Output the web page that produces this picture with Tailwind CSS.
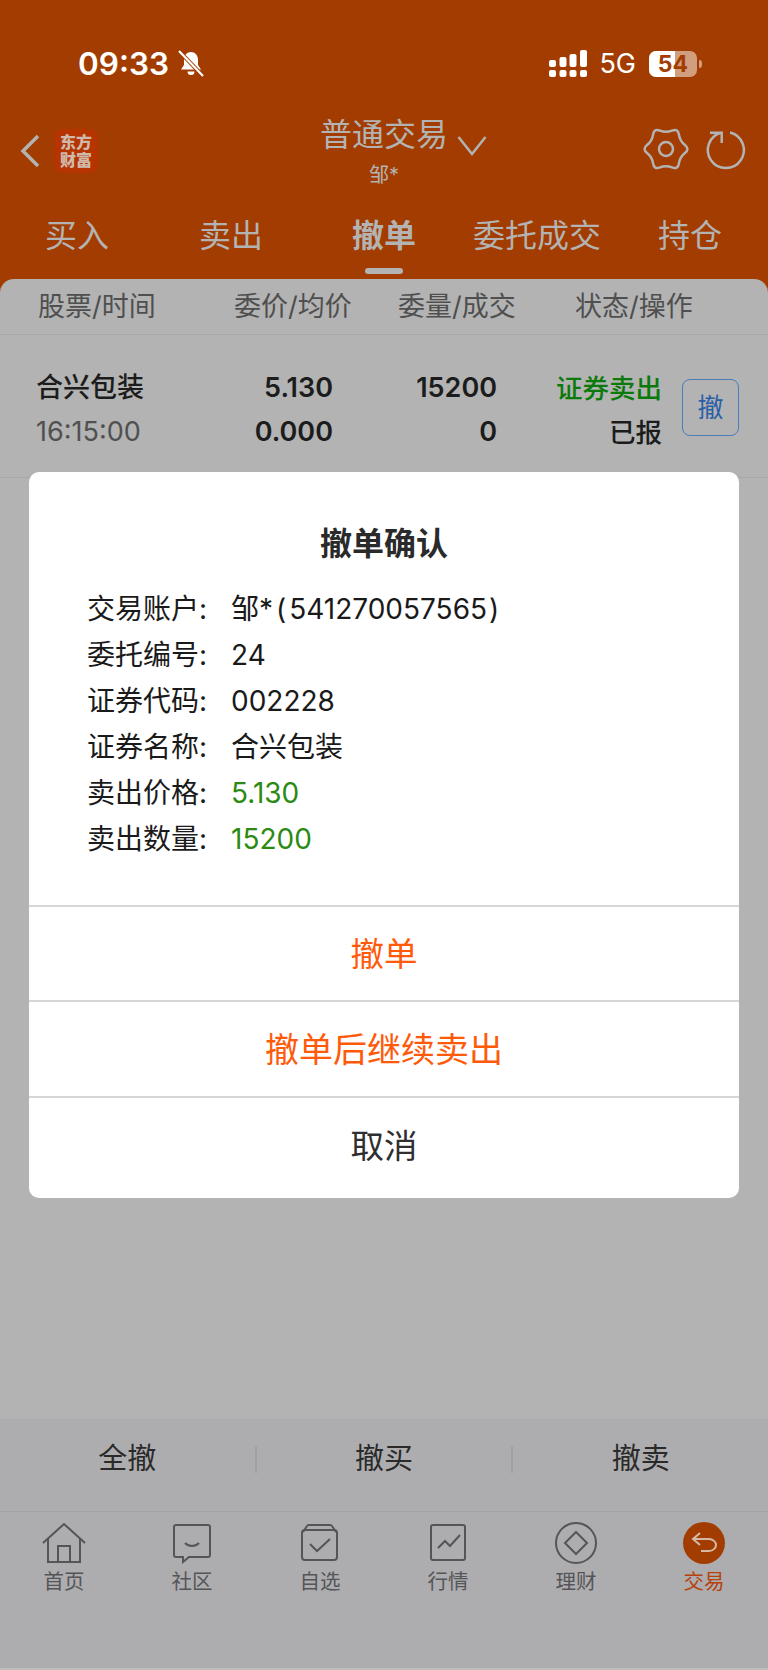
<!DOCTYPE html>
<html lang="zh-CN">
<head>
<meta charset="utf-8">
<script src="https://cdn.jsdelivr.net/npm/@tailwindcss/browser@4"></script>
</head>
<body class="m-0">
<div class="relative w-[768px] h-[1670px] overflow-hidden flex flex-col bg-[#a33c00] font-['Inter','Noto_Sans_CJK_SC',sans-serif] text-[#1c1c1c]">

  <!-- status bar -->
  <div class="h-[100px] shrink-0 flex items-start pt-[44px] pl-[78px] pr-[66px] text-white">
    <span class="text-[31.500px] leading-[39px] font-semibold">09:33</span>
    <svg class="ml-[9px] mt-[6px]" width="26" height="28" viewBox="0 0 26 28" fill="white">
      <path d="M13 2c-4 0-7 3-7 8v5l-3 4.500h20l-3-4.500v-5c0-5-3-8-7-8z"/>
      <path d="M9.500 21.500a3.500 3.500 0 0 0 7 0z"/>
      <path d="M1 1l24 25" stroke="#a33c00" stroke-width="4"/>
      <path d="M1 1l24 25" stroke="white" stroke-width="2.200"/>
    </svg>
    <div class="ml-auto flex items-center h-[39px]">
      <svg width="38" height="28" viewBox="0 0 38 28" fill="white">
        <rect x="0" y="10" width="7" height="7" rx="2"/><rect x="0" y="20" width="7" height="7" rx="2"/>
        <rect x="10.500" y="7" width="7" height="10" rx="2"/><rect x="10.500" y="20" width="7" height="7" rx="2"/>
        <rect x="20.500" y="4" width="7" height="13" rx="2"/><rect x="20.500" y="20" width="7" height="7" rx="2"/>
        <rect x="31" y="0" width="7" height="17" rx="2"/><rect x="31" y="20" width="7" height="7" rx="2"/>
      </svg>
      <span class="ml-[12px] text-[27px] leading-[39px] font-normal">5G</span>
      <div class="relative ml-[13px] w-[48px] h-[26px] rounded-[7px] bg-white/50">
        <div class="w-[26px] h-full rounded-l-[7px] bg-white"></div>
        <span class="absolute inset-0 text-center text-[23px] leading-[26px] font-bold text-[#a33c00]">54</span>
      </div>
      <div class="w-[3px] h-[8px] ml-[2px] rounded-r-full bg-white/50"></div>
    </div>
  </div>

  <!-- header -->
  <div class="h-[98px] shrink-0 relative flex items-start">
    <svg class="ml-[20px] mt-[34px]" width="20" height="34" viewBox="0 0 20 34" fill="none" stroke="#b3b3b3" stroke-width="3.500"><path d="M18 2L3 17l15 15"/></svg>
    <div class="ml-[14px] mt-[29px] w-[44px] h-[44px] rounded-[8px] bg-[#b53400] flex flex-col items-center justify-center text-[#d0b8aa] text-[16px] leading-[18px] font-black">
      <span>东方</span><span>财富</span>
    </div>
    <div class="absolute left-[319px] top-[15px] w-[130px] text-center">
      <div class="text-[32px] leading-[40px] text-[#b3b3b3] whitespace-nowrap">普通交易</div>
      <div class="text-[20px] leading-[24px] text-[#b3b3b3] mt-[8px]">邹*</div>
    </div>
    <svg class="absolute left-[457px] top-[35px]" width="30" height="22" viewBox="0 0 30 22" fill="none" stroke="#b3b3b3" stroke-width="2.500"><path d="M1.500 2L15 19 28.500 2"/></svg>
    <svg class="absolute left-[644px] top-[28px] overflow-visible" width="44" height="42" viewBox="0 0 44 42" fill="none" stroke="#b3b3b3" stroke-width="2.500">
      <path d="M28 2.610Q34 .22 34.930 6.610Q35.860 13 40.930 17Q46 21 40.930 25Q35.860 29 34.930 35.390Q34 41.780 28 39.390Q22 37 16 39.390Q10 41.780 9.070 35.390Q8.140 29 3.070 25Q-2 21 3.070 17Q8.140 13 9.070 6.610Q10 .22 16 2.610Q22 5 28 2.610z"/>
      <circle cx="22" cy="21" r="7"/>
    </svg>
    <svg class="absolute left-[706px] top-[30px] overflow-visible" width="40" height="40" viewBox="0 0 40 40" fill="none" stroke="#b3b3b3" stroke-width="2.500">
      <path d="M24 2.500A18 18 0 1 1 15.700 2.500M4 2.700h11.700V13"/>
    </svg>
  </div>

  <!-- tabs -->
  <div class="h-[81px] shrink-0 relative text-[#b3b3b3] text-[32px] leading-[38px]">
    <span class="absolute left-[45px] top-[19px]">买入</span>
    <span class="absolute left-[199px] top-[19px]">卖出</span>
    <span class="absolute left-[352px] top-[19px] font-bold">撤单</span>
    <span class="absolute left-[473px] top-[19px]">委托成交</span>
    <span class="absolute left-[658px] top-[19px]">持仓</span>
    <div class="absolute left-[365px] top-[70px] w-[38px] h-[6px] rounded-full bg-[#b3b3b3]"></div>
  </div>

  <!-- content -->
  <div class="flex-1 min-h-0 flex flex-col rounded-t-[14px] bg-[#b3b3b3]">
    <div class="h-[56px] shrink-0 flex items-center border-b border-[#a8a8a8] text-[#4f4f4f] text-[27px] leading-[32px] whitespace-nowrap">
      <span class="ml-[38px] w-[196px]">股票/时间</span>
      <span class="w-[164px]">委价/均价</span>
      <span class="w-[177px]">委量/成交</span>
      <span>状态/操作</span>
    </div>
    <div class="h-[143px] shrink-0 flex items-center pt-[8px] border-b border-[#a8a8a8]">
      <div class="ml-[36px] w-[130px] whitespace-nowrap">
        <div class="text-[27px] leading-[44px] font-medium">合兴包装</div>
        <div class="text-[27px] leading-[44px] text-[#505050]">16:15:00</div>
      </div>
      <div class="w-[167px] text-right text-[27px] leading-[44px] font-semibold">
        <div>5.130</div><div>0.000</div>
      </div>
      <div class="w-[164px] text-right text-[27px] leading-[44px] font-semibold">
        <div>15200</div><div>0</div>
      </div>
      <div class="w-[165px] text-right text-[26.500px] leading-[44px]">
        <div class="font-medium text-[#0b7a0b]">证券卖出</div>
        <div class="font-medium">已报</div>
      </div>
      <div class="ml-[20px] -mt-[6px] w-[57px] h-[57px] rounded-[8px] border border-[#4a7dbb] flex items-center justify-center text-[26px] text-[#2a5fa8]">撤</div>
    </div>
    <div class="flex-1"></div>
    <div class="h-[93px] shrink-0 bg-[#adadaf] border-b border-[#a3a3a5] flex items-center pb-[12px] text-[29px] text-[#2a2a2a]">
      <div class="flex-1 text-center">全撤</div>
      <div class="w-[2px] h-[27px] bg-[#a0a0a0]"></div>
      <div class="flex-1 text-center">撤买</div>
      <div class="w-[2px] h-[27px] bg-[#a0a0a0]"></div>
      <div class="flex-1 text-center">撤卖</div>
    </div>
    <div class="h-[158px] shrink-0 bg-[#adadaf] border-b-2 border-[#bdbdbd] flex items-start pt-[10px] text-[20.500px] leading-[26px] text-[#555558]">
      <div class="flex-1 flex flex-col items-center">
        <svg width="44" height="42" viewBox="0 0 44 42" fill="none" stroke="#555558" stroke-width="2"><path d="M1 21L22 2l21 19M6 17v23h32V17M16 40V24h12v16"/></svg>
        <span class="mt-[5px]">首页</span>
      </div>
      <div class="flex-1 flex flex-col items-center">
        <svg width="40" height="42" viewBox="0 0 40 42" fill="none" stroke="#555558" stroke-width="2"><path d="M4 3h32a2 2 0 0 1 2 2v28a2 2 0 0 1-2 2H17l-6 5v-5H4a2 2 0 0 1-2-2V5a2 2 0 0 1 2-2z"/><path d="M13 21c4 4 10 4 14 0"/></svg>
        <span class="mt-[5px]">社区</span>
      </div>
      <div class="flex-1 flex flex-col items-center">
        <svg width="40" height="42" viewBox="0 0 40 42" fill="none" stroke="#555558" stroke-width="2"><rect x="2" y="8" width="35" height="30" rx="3"/><path d="M3 10l4-6a2 2 0 0 1 2-1h21a2 2 0 0 1 2 1l4 6M10 22l7 7 13-12"/></svg>
        <span class="mt-[5px]">自选</span>
      </div>
      <div class="flex-1 flex flex-col items-center">
        <svg width="38" height="42" viewBox="0 0 38 42" fill="none" stroke="#555558" stroke-width="2"><rect x="2" y="3" width="34" height="35" rx="2"/><path d="M9 26l7-7 5 5 10-11"/></svg>
        <span class="mt-[5px]">行情</span>
      </div>
      <div class="flex-1 flex flex-col items-center">
        <svg width="42" height="42" viewBox="0 0 42 42" fill="none" stroke="#555558" stroke-width="2"><circle cx="21" cy="21" r="20"/><path d="M21 10l11 11-11 11-11-11z"/></svg>
        <span class="mt-[5px]">理财</span>
      </div>
      <div class="flex-1 flex flex-col items-center text-[#b5420a]">
        <svg width="42" height="42" viewBox="0 0 42 42" fill="none"><circle cx="21" cy="21" r="21" fill="#a33c00"/><path d="M17 11l-7 6 7 6M10 17h16c4 0 7 3 7 6s-3 6-7 6h-8" stroke="#d5b8a6" stroke-width="2"/></svg>
        <span class="mt-[5px]">交易</span>
      </div>
    </div>
  </div>

  <!-- dialog -->
  <div class="absolute left-[29px] top-[472px] w-[710px] h-[726px] rounded-[10px] bg-white flex flex-col text-[#1a1a1a]">
    <div class="h-[435px] shrink-0 border-b-2 border-[#d6d6d6] flex flex-col">
      <div class="pt-[52px] text-center text-[32px] leading-[40px] font-semibold text-[#2a2a2a]">撤单确认</div>
      <div class="mt-[22px] ml-[58px] text-[28px] leading-[46px]">
        <div class="flex"><span class="w-[144px]">交易账户:</span><span>邹*<span class="mx-[3px]">(</span>541270057565<span class="ml-[2px]">)</span></span></div>
        <div class="flex"><span class="w-[144px]">委托编号:</span><span>24</span></div>
        <div class="flex"><span class="w-[144px]">证券代码:</span><span>002228</span></div>
        <div class="flex"><span class="w-[144px]">证券名称:</span><span>合兴包装</span></div>
        <div class="flex"><span class="w-[144px]">卖出价格:</span><span class="text-[#2b8a12]">5.130</span></div>
        <div class="flex"><span class="w-[144px]">卖出数量:</span><span class="text-[#2b8a12]">15200</span></div>
      </div>
    </div>
    <div class="h-[95px] shrink-0 pt-[2px] border-b-2 border-[#d6d6d6] flex items-center justify-center text-[33.500px] text-[#ff5a0a]">撤单</div>
    <div class="h-[96px] shrink-0 pt-[1px] border-b-2 border-[#d6d6d6] flex items-center justify-center text-[34px] text-[#ff5a0a]">撤单后继续卖出</div>
    <div class="flex-1 flex items-center justify-center pb-[4px] text-[33.500px] text-[#2f2f2f]">取消</div>
  </div>
</div>
</body>
</html>
